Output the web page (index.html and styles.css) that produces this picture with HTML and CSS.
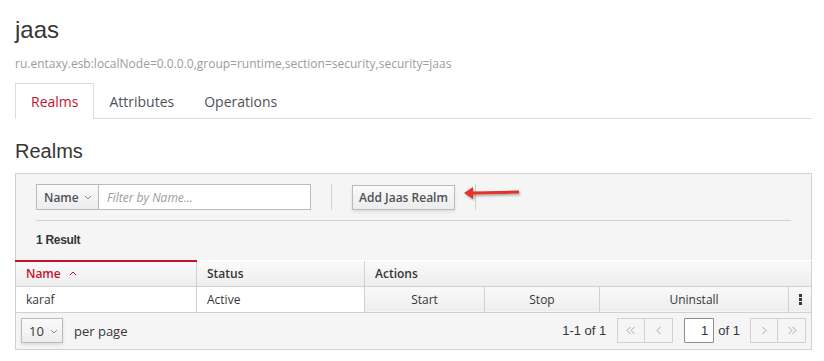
FILE: index.html
```html
<!DOCTYPE html>
<html lang="en">
<head>
    <meta charset="UTF-8">
    <title>jaas</title>
    <link rel="stylesheet" href="styles.css">
</head>
<body>
    <div class="page">
        <h1 class="title">jaas</h1>
        <div class="object-name">ru.entaxy.esb:localNode=0.0.0.0,group=runtime,section=security,security=jaas</div>

        <ul class="tabs">
            <li class="tab active">Realms</li>
            <li class="tab">Attributes</li>
            <li class="tab">Operations</li>
        </ul>

        <h2 class="section-title">Realms</h2>

        <div class="toolbar">
            <div class="toolbar-row">
                <div class="filter">
                    <div class="filter-type">Name
                        <svg class="caret" width="8" height="5" viewBox="0 0 8 5"><polyline points="1,1 4,4 7,1" fill="none" stroke="#8b8d8f" stroke-width="1"/></svg>
                    </div>
                    <input class="filter-input" type="text" placeholder="Filter by Name...">
                </div>
                <div class="divider"></div>
                <button class="btn">Add Jaas Realm</button>
                <div class="divider"></div>
                <svg class="arrow" width="62" height="16" viewBox="0 0 62 16">
                    <defs>
                        <filter id="sh" x="-10%" y="-50%" width="120%" height="200%">
                            <feDropShadow dx="1" dy="1.5" stdDeviation="1" flood-color="#000" flood-opacity="0.35"/>
                        </filter>
                    </defs>
                    <g filter="url(#sh)">
                        <polygon points="1,8 10,2 10,6.5 56,5.5 56,8.5 10,9.5 10,14" fill="#e2352b"/>
                    </g>
                </svg>
            </div>
            <div class="results">1 Result</div>
        </div>

        <table class="grid">
            <colgroup>
                <col style="width: 181px">
                <col style="width: 168px">
                <col style="width: 120px">
                <col style="width: 115px">
                <col style="width: 189px">
                <col>
            </colgroup>
            <thead>
                <tr>
                    <th class="sorted">Name
                        <svg class="sort" width="8" height="5" viewBox="0 0 8 5"><polyline points="1,4 4,1 7,4" fill="none" stroke="#c8102e" stroke-width="1"/></svg>
                    </th>
                    <th>Status</th>
                    <th colspan="4">Actions</th>
                </tr>
            </thead>
            <tbody>
                <tr>
                    <td>karaf</td>
                    <td>Active</td>
                    <td class="action">Start</td>
                    <td class="action">Stop</td>
                    <td class="action">Uninstall</td>
                    <td class="action kebab">
                        <svg width="3" height="11" viewBox="0 0 3 11"><rect x="0" y="0" width="3" height="3" fill="#363636"/><rect x="0" y="4" width="3" height="3" fill="#363636"/><rect x="0" y="8" width="3" height="3" fill="#363636"/></svg>
                    </td>
                </tr>
            </tbody>
        </table>

        <div class="pager">
            <div class="per-page">
                <div class="page-size">10
                    <svg class="caret" width="8" height="5" viewBox="0 0 8 5"><polyline points="1,1 4,4 7,1" fill="none" stroke="#8b8d8f" stroke-width="1"/></svg>
                </div>
                <span>per page</span>
            </div>
            <div class="pages">
                <span class="range">1-1 of 1</span>
                <div class="btn-group">
                    <div class="page-btn">
                        <svg width="10" height="9" viewBox="0 0 10 9"><polyline points="4.5,1 1,4.5 4.5,8" fill="none" stroke="#a8a8a8"/><polyline points="8.5,1 5,4.5 8.5,8" fill="none" stroke="#a8a8a8"/></svg>
                    </div>
                    <div class="page-btn">
                        <svg width="6" height="9" viewBox="0 0 6 9"><polyline points="4.5,1 1,4.5 4.5,8" fill="none" stroke="#a8a8a8"/></svg>
                    </div>
                </div>
                <input class="page-input" type="text" value="1">
                <span class="of">of 1</span>
                <div class="btn-group">
                    <div class="page-btn">
                        <svg width="6" height="9" viewBox="0 0 6 9"><polyline points="1.5,1 5,4.5 1.5,8" fill="none" stroke="#a8a8a8"/></svg>
                    </div>
                    <div class="page-btn">
                        <svg width="10" height="9" viewBox="0 0 10 9"><polyline points="1.5,1 5,4.5 1.5,8" fill="none" stroke="#a8a8a8"/><polyline points="5.5,1 9,4.5 5.5,8" fill="none" stroke="#a8a8a8"/></svg>
                    </div>
                </div>
            </div>
        </div>
    </div>
</body>
</html>
```

FILE: styles.css
```css
* {
    margin: 0;
    padding: 0;
    box-sizing: border-box;
}

body {
    background: #fff;
    color: #363636;
    font-family: 'Open Sans', sans-serif;
    font-size: 12px;
}

.page {
    padding: 16px 12px 0 15px;
}

.title {
    font-family: 'Liberation Sans', Arial, sans-serif;
    font-weight: 400;
    font-size: 24px;
    line-height: 28px;
    color: #363636;
}

.object-name {
    margin-top: 11px;
    color: #9c9c9c;
    font-size: 12px;
    line-height: 18px;
}

.tabs {
    list-style: none;
    display: flex;
    margin-top: 10px;
    height: 36px;
    border-bottom: 1px solid #dcdcdc;
}

.tab {
    padding: 8px 14px 0 14px;
    font-size: 14px;
    line-height: 19px;
    color: #4d5258;
    border: 1px solid transparent;
    border-bottom: none;
}

.tab.active {
    color: #c8102e;
    background: #fff;
    border-color: #dcdcdc;
    padding: 8px 15px 0 15px;
    margin-bottom: -1px;
}

.section-title {
    font-family: 'Liberation Sans', Arial, sans-serif;
    font-weight: 400;
    font-size: 20px;
    line-height: 28px;
    margin-top: 18px;
    color: #363636;
}

.toolbar {
    margin-top: 8px;
    background: #f5f5f5;
    border: 1px solid #d1d1d1;
    border-bottom: none;
    padding: 10px 20px 0 20px;
}

.toolbar-row {
    position: relative;
    display: flex;
    align-items: center;
    height: 26px;
}

.filter {
    display: flex;
    height: 26px;
}

.filter-type {
    display: flex;
    align-items: center;
    gap: 5px;
    width: 63px;
    padding-left: 7px;
    background: linear-gradient(#fafafa, #ededed);
    border: 1px solid #bbb;
    font-weight: 600;
    color: #4d5258;
}

.caret {
    margin-top: 1px;
}

.filter-input {
    width: 212px;
    height: 26px;
    border: 1px solid #bbb;
    border-left: none;
    padding: 0 8px;
    font-family: 'Open Sans', sans-serif;
    font-size: 12px;
    outline: none;
}

.filter-input::placeholder {
    color: #9c9c9c;
    font-style: italic;
}

.divider {
    width: 1px;
    height: 26px;
    background: #d1d1d1;
    margin: 0 20px;
}

.btn {
    height: 25px;
    width: 103px;
    background: linear-gradient(#fafafa, #ededed);
    border: 1px solid #bbb;
    box-shadow: 0 2px 3px rgba(3, 3, 3, 0.1);
    font-family: 'Open Sans', sans-serif;
    font-size: 12px;
    font-weight: 600;
    color: #4d5258;
}

.arrow {
    position: absolute;
    left: 427px;
    top: 1px;
}

.results {
    margin-top: 10px;
    border-top: 1px solid #d1d1d1;
    height: 40px;
    padding-top: 12px;
    font-family: 'Liberation Sans', Arial, sans-serif;
    font-weight: 700;
    font-size: 12px;
    letter-spacing: -0.3px;
    color: #363636;
}

.grid {
    width: 797px;
    table-layout: fixed;
    border-collapse: collapse;
}

.grid th {
    height: 25px;
    text-align: left;
    padding: 0 10px;
    font-weight: 600;
    color: #363636;
    background: linear-gradient(#fafafa, #ededed);
    border: 1px solid #d1d1d1;
    border-top: none;
}

.grid th.sorted {
    color: #c8102e;
    border-top: 2px solid #c8102e;
}

.sort {
    margin-left: 5px;
    margin-bottom: 2px;
}

.grid td {
    height: 26px;
    padding: 0 10px;
    border: 1px solid #d1d1d1;
    background: #fff;
    white-space: nowrap;
}

.grid td.action {
    text-align: center;
    background: linear-gradient(#fafafa, #ededed);
    color: #363636;
}

.grid td.kebab {
    padding: 0;
    line-height: 0;
}

.pager {
    display: flex;
    justify-content: space-between;
    align-items: center;
    width: 797px;
    height: 37px;
    background: #f5f5f5;
    border: 1px solid #d1d1d1;
    border-top: none;
    padding: 0 5px;
}

.per-page {
    display: flex;
    align-items: center;
    gap: 11px;
    font-size: 13px;
}

.page-size {
    display: flex;
    align-items: center;
    gap: 6px;
    width: 42px;
    height: 25px;
    padding-left: 7px;
    background: linear-gradient(#fafafa, #ededed);
    border: 1px solid #bbb;
    box-shadow: 0 2px 3px rgba(3, 3, 3, 0.1);
    font-size: 13px;
}

.pages {
    display: flex;
    align-items: center;
    font-family: 'Liberation Sans', Arial, sans-serif;
    font-size: 13px;
    color: #363636;
}

.range {
    margin-right: 11px;
}

.btn-group {
    display: flex;
}

.page-btn {
    display: flex;
    align-items: center;
    justify-content: center;
    width: 28px;
    height: 25px;
    background: #f5f5f5;
    border: 1px solid #d1d1d1;
}

.page-btn + .page-btn {
    border-left: none;
}

.page-input {
    width: 30px;
    height: 25px;
    margin-left: 11px;
    border: 1px solid #8b8d8f;
    border-radius: 1px;
    text-align: right;
    padding-right: 5px;
    font-family: 'Liberation Sans', Arial, sans-serif;
    font-size: 13px;
    color: #363636;
    outline: none;
}

.of {
    margin: 0 10px 0 4px;
}
```
